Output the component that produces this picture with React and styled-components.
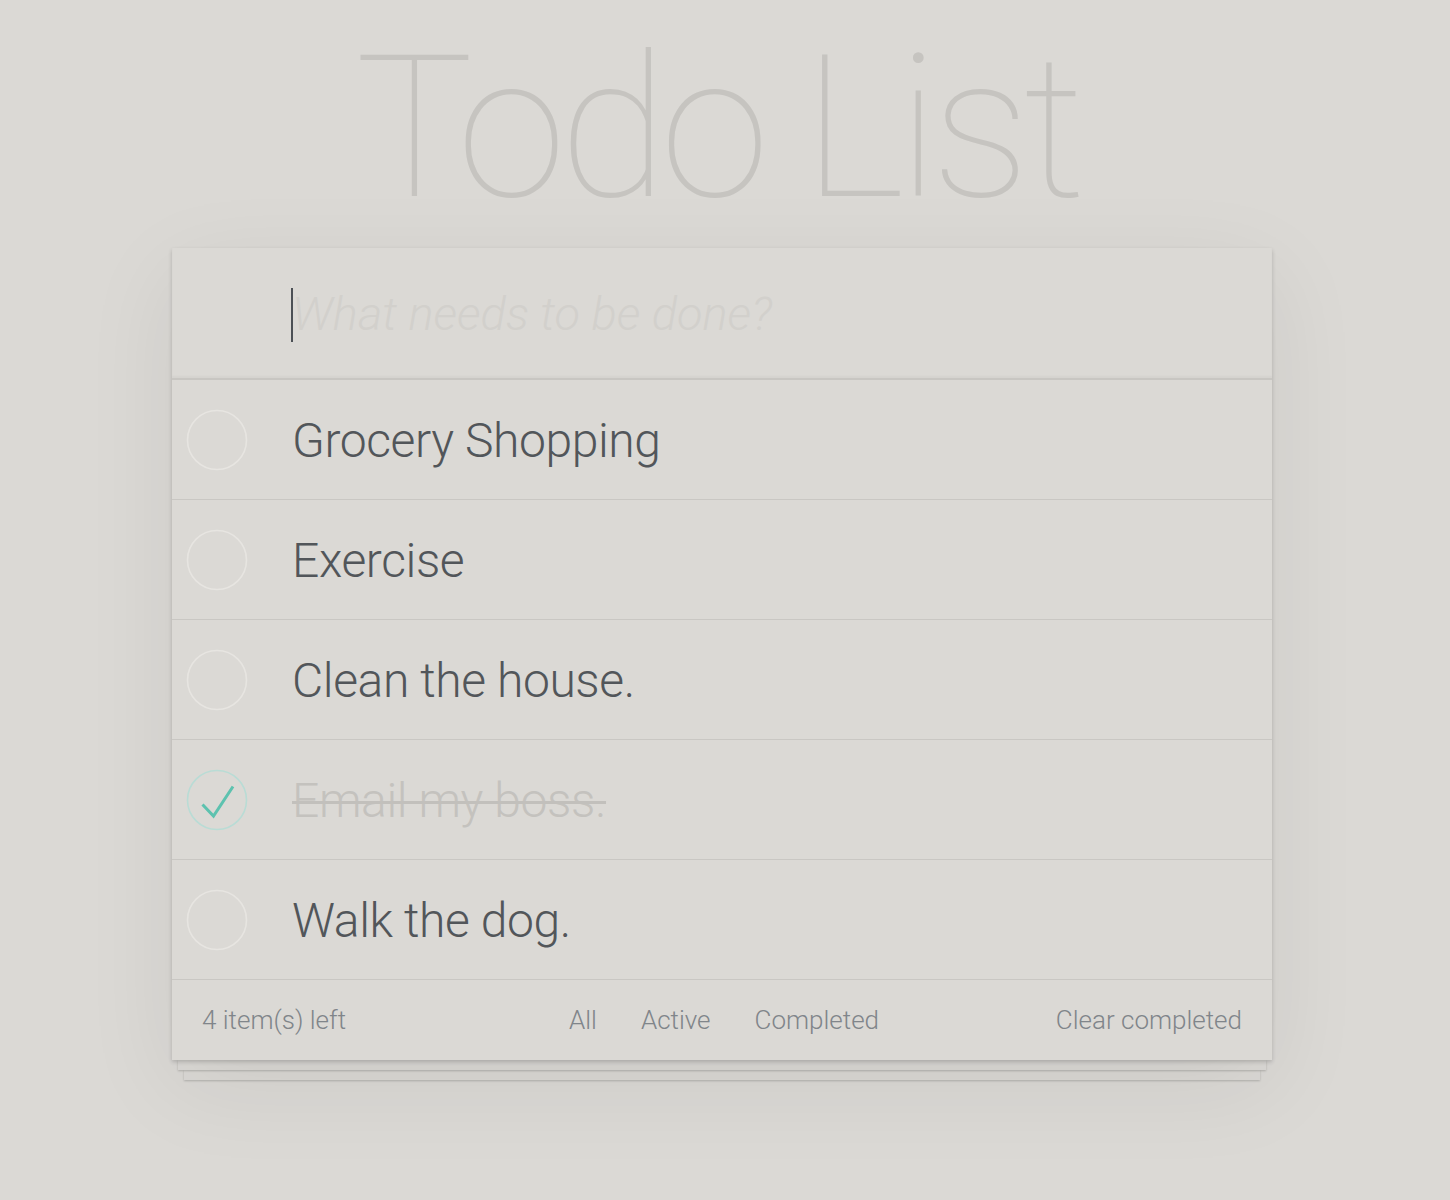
import React from "react";
import styled, { createGlobalStyle } from "styled-components";

const COLORS = {
    page: "#dbd9d5",
    card: "#dbd9d5",
    line: "#c9c7c3",
    text: "#52565a",
    faint: "#c4c2be",
    footer: "#80858a",
    teal: "#5dc2af",
};

const TODOS = [
    { id: 1, text: "Grocery Shopping", done: false },
    { id: 2, text: "Exercise", done: false },
    { id: 3, text: "Clean the house.", done: false },
    { id: 4, text: "Email my boss.", done: true },
    { id: 5, text: "Walk the dog.", done: false },
];

const GlobalStyle = createGlobalStyle`
    html, body {
        margin: 0;
        background: ${COLORS.page};
        font-family: Roboto, "Liberation Sans", sans-serif;
    }
`;

function Check({ done }) {
    return (
        <svg width="62" height="62" viewBox="0 0 62 62">
            <circle
                cx="31"
                cy="31"
                r="29.5"
                fill="none"
                stroke={done ? "#b9dcd5" : "#e7e5e1"}
                strokeWidth="1.6"
            />
            {done && (
                <polyline
                    points="16.5,35.5 27.5,47 47,17.5"
                    fill="none"
                    stroke={COLORS.teal}
                    strokeWidth="3"
                />
            )}
        </svg>
    );
}

function App() {
    return (
        <Page>
            <GlobalStyle />
            <Title>Todo List</Title>
            <Stack>
                <Card>
                    <NewTodo>
                        <Caret />
                        <Placeholder>What needs to be done?</Placeholder>
                    </NewTodo>
                    <List>
                        {TODOS.map((todo) => (
                            <Row key={todo.id}>
                                <Toggle>
                                    <Check done={todo.done} />
                                </Toggle>
                                <Label $done={todo.done}>{todo.text}</Label>
                            </Row>
                        ))}
                    </List>
                    <Footer>
                        <Count>4 item(s) left</Count>
                        <Filters>
                            <Filter>All</Filter>
                            <Filter>Active</Filter>
                            <Filter>Completed</Filter>
                        </Filters>
                        <Clear>Clear completed</Clear>
                    </Footer>
                </Card>
                <Sheet $inset={6} />
                <Sheet $inset={12} />
            </Stack>
        </Page>
    );
}

const Page = styled.div`
    min-height: 1200px;
    padding: 0 6px 0 0;
    box-sizing: border-box;
    overflow: hidden;
`;

const Title = styled.h1`
    margin: 0;
    padding: 8px 10px 0 0;
    height: 240px;
    text-align: center;
    font-family: Roboto, sans-serif;
    font-weight: 100;
    font-size: 198px;
    line-height: 240px;
    color: #c6c4c0;
    letter-spacing: -7px;
`;

const Stack = styled.div`
    width: 1100px;
    margin: 0 auto;
`;

const Card = styled.section`
    position: relative;
    z-index: 2;
    background: ${COLORS.card};
    box-shadow: 0 2px 4px rgba(0, 0, 0, 0.18), 0 25px 90px rgba(0, 0, 0, 0.07);
`;

const NewTodo = styled.div`
    height: 130px;
    display: flex;
    align-items: center;
    padding-left: 120px;
    border-bottom: 2px solid #c8c6c2;
    box-shadow: inset 0 -2px 2px rgba(0, 0, 0, 0.03);
    position: relative;
`;

const Caret = styled.span`
    position: absolute;
    left: 119px;
    top: 40px;
    width: 2px;
    height: 54px;
    background: #4c5055;
`;

const Placeholder = styled.span`
    font-size: 47px;
    font-weight: 300;
    font-style: italic;
    color: #d2d0cc;
`;

const List = styled.ul`
    list-style: none;
    margin: 0;
    padding: 0;
`;

const Row = styled.li`
    height: 119px;
    display: flex;
    align-items: center;
    border-bottom: 1px solid ${COLORS.line};
`;

const Toggle = styled.div`
    width: 120px;
    padding-left: 14px;
    box-sizing: border-box;
    display: flex;
    align-items: center;
`;

const Label = styled.span`
    font-size: 48px;
    font-weight: 300;
    color: ${(p) => (p.$done ? COLORS.faint : COLORS.text)};
    text-decoration: ${(p) => (p.$done ? "line-through" : "none")};
    text-decoration-thickness: 3px;
    text-decoration-color: #c2c0bc;
    letter-spacing: -0.4px;
    padding-top: 2px;
`;

const Footer = styled.footer`
    height: 80px;
    display: flex;
    align-items: center;
    justify-content: space-between;
    padding: 0 30px;
    font-size: 26px;
    font-weight: 300;
    color: ${COLORS.footer};
`;

const Count = styled.span`
    width: 250px;
`;

const Filters = styled.div`
    display: flex;
    gap: 44px;
    padding-left: 4px;
`;

const Filter = styled.span``;

const Clear = styled.span`
    width: 250px;
    text-align: right;
`;

const Sheet = styled.div`
    height: 10px;
    margin: 0 ${(p) => p.$inset}px;
    background: ${COLORS.card};
    box-shadow: 0 1px 2px rgba(0, 0, 0, 0.2);
    position: relative;
    z-index: ${(p) => (p.$inset === 6 ? 1 : 0)};
`;

export default App;
